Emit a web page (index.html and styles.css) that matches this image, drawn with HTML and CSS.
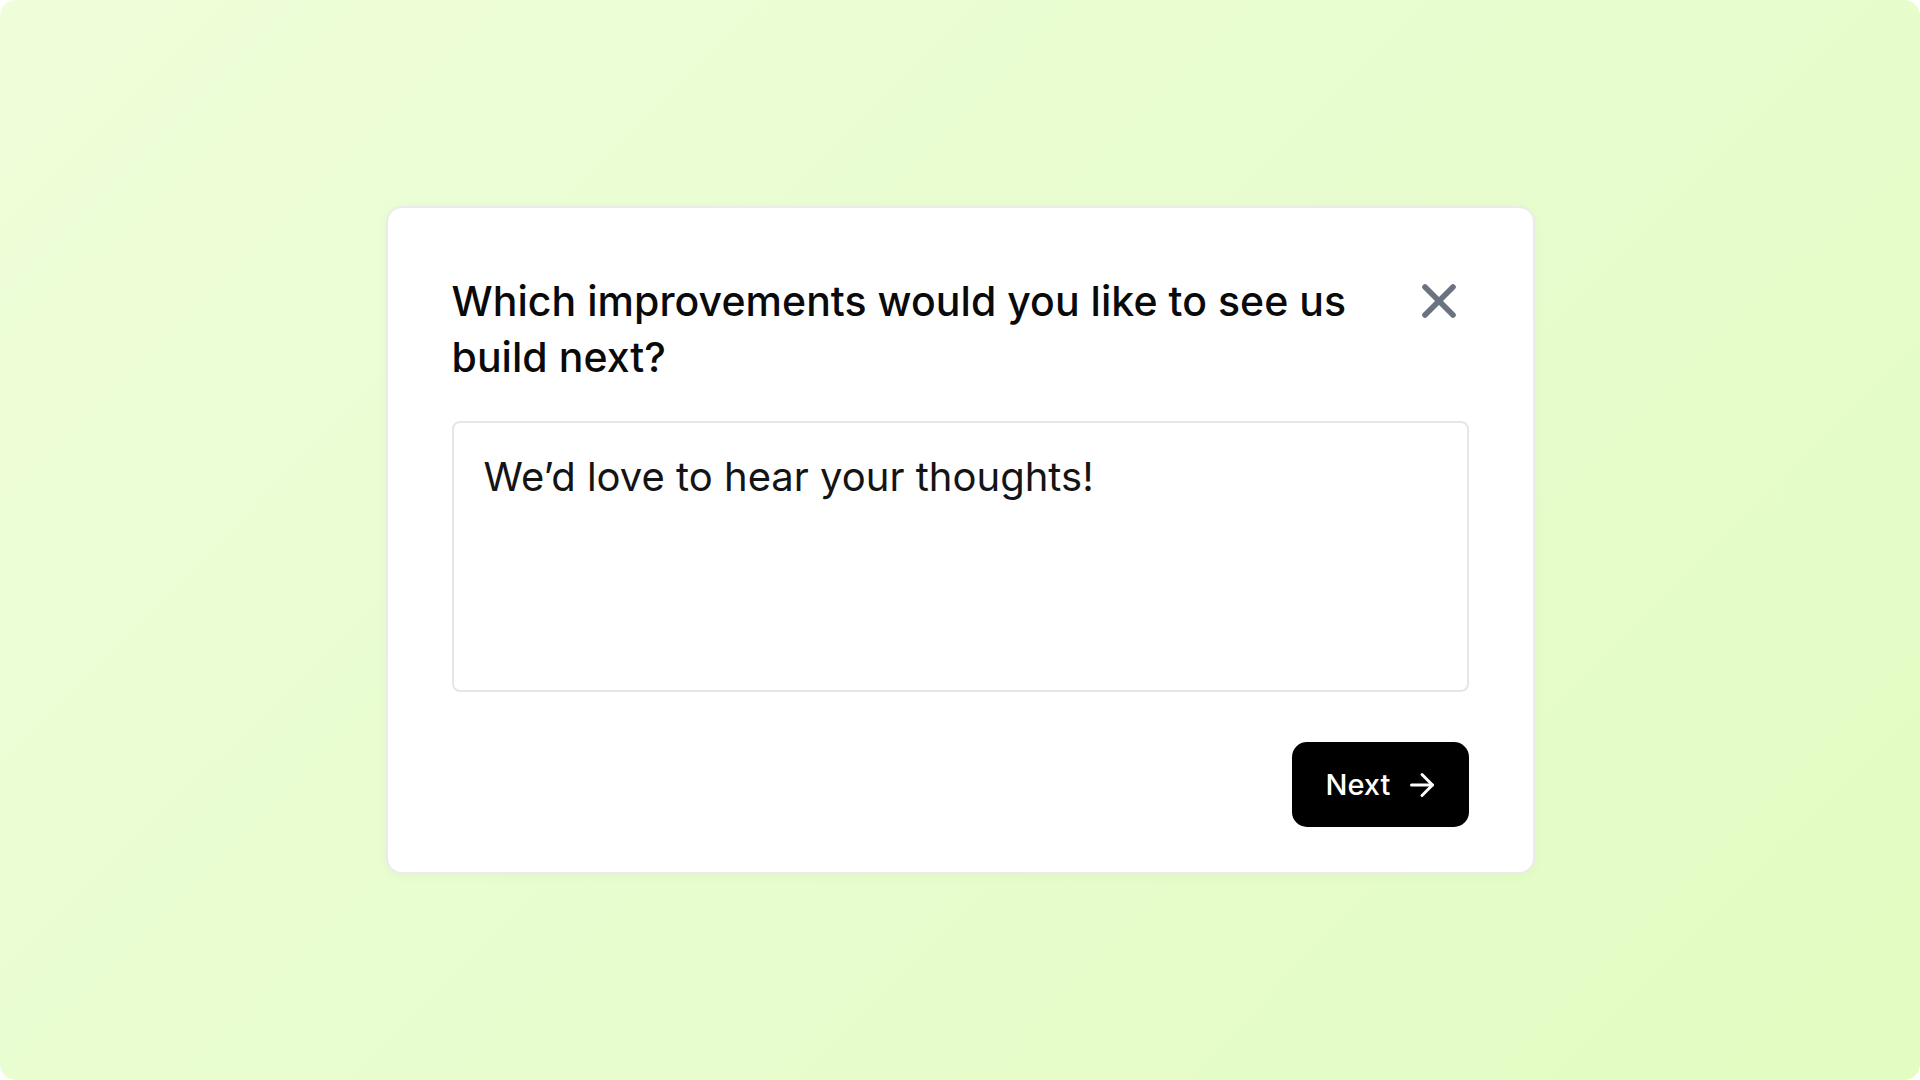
FILE: index.html
```html
<!DOCTYPE html>
<html lang="en">
<head>
<meta charset="utf-8">
<title>Feedback</title>
<link rel="stylesheet" href="styles.css">
</head>
<body>
<main class="page">
  <section class="card">
    <header class="card-head">
      <h1 class="title">Which improvements would you like to see us build next?</h1>
      <button class="close" type="button" aria-label="Close">
        <svg width="56" height="56" viewBox="0 0 24 24" fill="none" stroke="currentColor" stroke-width="2.4" stroke-linecap="round" stroke-linejoin="round"><path d="M18 6 6 18"/><path d="m6 6 12 12"/></svg>
      </button>
    </header>
    <textarea class="answer" placeholder="We’d love to hear your thoughts!"></textarea>
    <div class="actions">
      <button class="next" type="button">
        <span>Next</span>
        <svg width="36" height="36" viewBox="0 0 24 24" fill="none" stroke="currentColor" stroke-width="2" stroke-linecap="round" stroke-linejoin="round"><path d="M5 12h14"/><path d="m12 5 7 7-7 7"/></svg>
      </button>
    </div>
  </section>
</main>
</body>
</html>
```
FILE: styles.css
```css
* { box-sizing: border-box; }
html, body { margin: 0; padding: 0; background: #ffffff; }
body { font-family: Inter, "Noto Sans", sans-serif; color: #111111; }

.page {
  width: 1920px;
  height: 1080px;
  border-radius: 16px;
  background: linear-gradient(135deg, #eefed9 0%, #e8fdcf 50%, #e2fcc1 100%);
  display: flex;
  align-items: center;
  justify-content: center;
}

.card {
  width: 1149px;
  height: 668px;
  background: #ffffff;
  border: 2px solid #ebebeb;
  border-radius: 16px;
  padding: 65px 64px 45px 64px;
  display: flex;
  flex-direction: column;
  box-shadow: 0 2px 12px rgba(0, 0, 0, 0.035);
}

.card-head {
  display: flex;
  align-items: flex-start;
  justify-content: space-between;
  gap: 24px;
}

.title {
  margin: 0;
  flex: 1;
  font-size: 41px;
  line-height: 56px;
  font-weight: 500;
  color: #0a0a0a;
  letter-spacing: 0.05px;
}

.close {
  flex: none;
  width: 56px;
  height: 56px;
  margin-right: 2px;
  padding: 0;
  border: 0;
  background: transparent;
  color: #6b7280;
  display: flex;
  align-items: center;
  justify-content: center;
  cursor: pointer;
}

.answer {
  margin-top: 36px;
  width: 100%;
  height: 271px;
  border: 2px solid #e6e6e6;
  border-radius: 8px;
  padding: 25px 30px;
  font-family: Inter, "Noto Sans", sans-serif;
  font-size: 40px;
  line-height: 57px;
  color: #111111;
  resize: none;
  outline: none;
  background: #ffffff;
}
.answer::placeholder { color: #141414; opacity: 1; }

.actions {
  margin-top: 50px;
  display: flex;
  justify-content: flex-end;
}

.next {
  height: 85px;
  width: 177px;
  padding: 0 30px 0 34px;
  border: 0;
  border-radius: 15px;
  background: #000000;
  color: #ffffff;
  font-family: Inter, "Noto Sans", sans-serif;
  font-size: 29px;
  font-weight: 500;
  display: flex;
  align-items: center;
  justify-content: space-between;
  gap: 14px;
  cursor: pointer;
}
.next svg { flex: none; }
```
